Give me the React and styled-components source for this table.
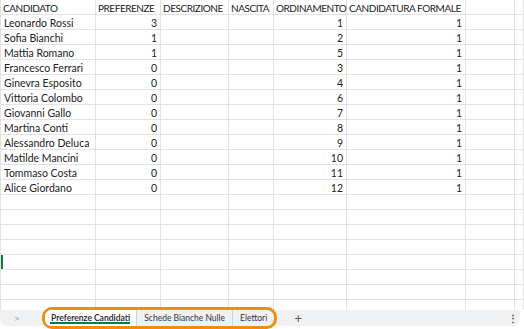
import React from 'react';
import styled, { createGlobalStyle } from 'styled-components';

const columns = [95, 65, 68, 45, 73, 119, 49];

const headers = [
  'CANDIDATO',
  'PREFERENZE',
  'DESCRIZIONE',
  'NASCITA',
  'ORDINAMENTO',
  'CANDIDATURA FORMALE'
];

const candidates = [
  ['Leonardo Rossi', 3, 1],
  ['Sofia Bianchi', 1, 2],
  ['Mattia Romano', 1, 5],
  ['Francesco Ferrari', 0, 3],
  ['Ginevra Esposito', 0, 4],
  ['Vittoria Colombo', 0, 6],
  ['Giovanni Gallo', 0, 7],
  ['Martina Conti', 0, 8],
  ['Alessandro Deluca', 0, 9],
  ['Matilde Mancini', 0, 10],
  ['Tommaso Costa', 0, 11],
  ['Alice Giordano', 0, 12]
];

const EMPTY_ROWS = 8;
const MARKED_ROW = 17;

/* ------------------------------------------------------------------ */
/* Styles                                                              */
/* ------------------------------------------------------------------ */
const GlobalStyle = createGlobalStyle`
  html, body {
    margin: 0;
    padding: 0;
    background: #ffffff;
  }
  body {
    font-family: Lato, 'Liberation Sans', sans-serif;
    color: #222222;
  }
`;

const Page = styled.div`
  width: 524px;
  height: 329px;
  display: flex;
  flex-direction: column;
  overflow: hidden;
`;

const Sheet = styled.div`
  height: 310px;
  overflow: hidden;
  display: grid;
  grid-template-columns: ${columns.map(w => `${w}px`).join(' ')} 1fr;
  grid-auto-rows: 15px;
  border-left: 1px solid #e2e2e2;
`;

const Cell = styled.div`
  box-sizing: border-box;
  border-right: 1px solid #e2e2e2;
  border-bottom: 1px solid #e2e2e2;
  padding: ${props => (props.header ? '0 2px' : '0 3px')};
  font-size: ${props => (props.header ? '10px' : '10.5px')};
  letter-spacing: ${props => (props.header ? '-0.45px' : '0')};
  line-height: 16px;
  white-space: nowrap;
  overflow: visible;
  text-align: ${props => (props.numeric ? 'right' : 'left')};
  box-shadow: ${props => (props.marked ? 'inset 2px 0 0 #107c41' : 'none')};
`;

const Footer = styled.div`
  height: 16px;
  margin-right: 4px;
  display: flex;
  align-items: stretch;
  background: #eff1f3;
  border-radius: 0 0 8px 8px;
`;

const NavArrow = styled.div`
  width: 45px;
  padding-left: 14px;
  box-sizing: border-box;
  display: flex;
  align-items: center;
  color: #9aa0a6;
  font-size: 10px;
`;

const TabGroup = styled.div`
  display: flex;
  align-items: stretch;
  outline: 3px solid #f28c0f;
  border-radius: 7px;
`;

const Tab = styled.div`
  position: relative;
  display: flex;
  align-items: center;
  padding: 0 ${props => props.pad}px;
  font-size: 8.5px;
  color: #333333;
  font-weight: ${props => (props.active ? 700 : 400)};
  background: ${props => (props.active ? '#ffffff' : 'transparent')};
  border-radius: ${props => (props.active ? '6px 0 0 6px' : '0')};

  & + & {
    border-left: 1px solid #d0d3d8;
  }

  &::after {
    content: '';
    display: ${props => (props.active ? 'block' : 'none')};
    position: absolute;
    left: 5px;
    right: 6px;
    bottom: 2px;
    height: 2px;
    background: #107c41;
  }
`;

const AddButton = styled.div`
  width: 48px;
  display: flex;
  align-items: center;
  justify-content: center;
  font-size: 13px;
  color: #555555;
`;

const Spacer = styled.div`
  flex: 1;
`;

const MoreButton = styled.div`
  width: 14px;
  display: flex;
  align-items: center;
  justify-content: center;
  font-size: 10px;
  font-weight: 700;
  color: #444444;
`;

/* ------------------------------------------------------------------ */
/* Component                                                           */
/* ------------------------------------------------------------------ */
const App = () => {
  const blank = Array.from({ length: columns.length + 1 - headers.length });

  return (
    <Page>
      <GlobalStyle />
      <Sheet>
        {headers.map(h => (
          <Cell key={h} header>
            {h}
          </Cell>
        ))}
        {blank.map((_, i) => (
          <Cell key={`h${i}`} />
        ))}

        {candidates.map(([name, prefs, order]) => (
          <React.Fragment key={name}>
            <Cell>{name}</Cell>
            <Cell numeric>{prefs}</Cell>
            <Cell />
            <Cell />
            <Cell numeric>{order}</Cell>
            <Cell numeric>1</Cell>
            {blank.map((_, i) => (
              <Cell key={i} />
            ))}
          </React.Fragment>
        ))}

        {Array.from({ length: EMPTY_ROWS }).map((_, r) =>
          Array.from({ length: columns.length + 1 }).map((_, c) => (
            <Cell
              key={`e${r}-${c}`}
              marked={c === 0 && r + candidates.length + 1 === MARKED_ROW}
            />
          ))
        )}
      </Sheet>

      <Footer>
        <NavArrow>&gt;</NavArrow>
        <TabGroup>
          <Tab active pad={6}>
            Preferenze Candidati
          </Tab>
          <Tab pad={7}>Schede Bianche Nulle</Tab>
          <Tab pad={7}>Elettori</Tab>
        </TabGroup>
        <AddButton>+</AddButton>
        <Spacer />
        <MoreButton>⋮</MoreButton>
      </Footer>
    </Page>
  );
};

export default App;
